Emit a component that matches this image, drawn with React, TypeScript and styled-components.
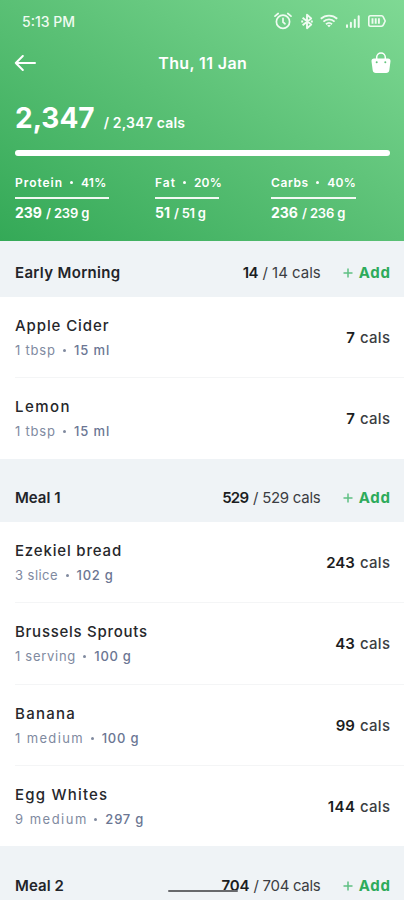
import React from 'react';
import styled, { createGlobalStyle } from 'styled-components';

const GlobalStyle = createGlobalStyle`
  *, *::before, *::after { box-sizing: border-box; }
  html, body { margin: 0; padding: 0; background: #fff; }
  body { font-family: Inter, 'Open Sans', sans-serif; color: #26272b; overflow: hidden; }
`;

interface TextProps {
  $track?: number;
}

const Text = styled.span<TextProps>`
  letter-spacing: ${({ $track = 0 }) => $track}em;
  margin-right: ${({ $track = 0 }) => -$track}em;
  white-space: pre;
`;

const Screen = styled.main`
  width: 100%;
  height: 900px;
  overflow: hidden;
  position: relative;
`;

const Header = styled.header`
  height: 241px;
  display: flex;
  flex-direction: column;
  color: #fff;
  background: linear-gradient(to top right, #34a957 0%, #5ac075 50%, #7fd994 100%);
`;

const StatusBar = styled.div`
  height: 42px;
  padding: 0 18px 0 22px;
  display: flex;
  align-items: center;
  justify-content: space-between;
  font-size: 14px;
  font-weight: 500;
  color: #effbf1;
`;

const StatusIcons = styled.div`
  display: flex;
  align-items: center;
  svg { display: block; }
`;

const Bluetooth = styled.span`
  margin: 0 7px 0 9px;
`;

const Wifi = styled.span`
  margin-right: 8px;
`;

const Signal = styled.span`
  margin-right: 8px;
`;

const NavBar = styled.nav`
  height: 42px;
  padding: 0 13px 0 14px;
  display: grid;
  grid-template-columns: 22px 1fr 20px;
  align-items: center;
  svg { display: block; }
`;

const NavTitle = styled.h1`
  margin: 0;
  padding-right: 2px;
  text-align: center;
  font-size: 16px;
  font-weight: 600;
  line-height: 20px;
`;

const Calories = styled.div`
  height: 66px;
  padding: 0 15px 15px;
  display: flex;
  align-items: flex-end;
  gap: 9px;
`;

const CaloriesEaten = styled(Text)`
  font-size: 28px;
  font-weight: 700;
  line-height: 34px;
`;

const CaloriesGoal = styled(Text)`
  font-size: 14px;
  font-weight: 600;
  line-height: 25px;
`;

const ProgressTrack = styled.div`
  height: 6px;
  margin: 0 14px 0 15px;
  border-radius: 3px;
  background: #fff;
`;

const Macros = styled.div`
  padding: 16px 15px 0;
  display: grid;
  grid-template-columns: 140px 116px 1fr;
`;

const Macro = styled.div<{ $width: number }>`
  width: ${({ $width }) => $width}px;
`;

const MacroLabel = styled.div`
  height: 27px;
  padding-bottom: 5px;
  display: flex;
  align-items: center;
  font-size: 12px;
  font-weight: 600;
  border-bottom: 2px solid rgba(255, 255, 255, 0.92);
`;

const MacroAmount = styled.div`
  height: 28px;
  display: flex;
  align-items: center;
  gap: 4px;
  font-size: 13px;
  font-weight: 600;
  line-height: 18px;
`;

const Strong = styled(Text)`
  font-size: 14px;
  font-weight: 700;
`;

const Dot = styled.i`
  flex: none;
  width: 3px;
  height: 3px;
  margin: 1px 8px 0;
  border-radius: 50%;
  background: currentColor;
`;

const SectionBar = styled.div<{ $height: number; $overlap: number }>`
  height: ${({ $height }) => $height}px;
  margin-top: ${({ $overlap }) => -$overlap}px;
  padding: 0 14px 14px 15px;
  display: flex;
  align-items: flex-end;
  background: #eff3f6;
  font-size: 15px;
  line-height: 20px;
  color: #3b3d42;
`;

const SectionTitle = styled.h2`
  margin: 0;
  flex: 1;
  font-size: 15px;
  font-weight: 600;
  color: #222429;
`;

const SectionTotal = styled.div`
  display: flex;
  gap: 4px;
  margin-right: 22px;
`;

const Bold = styled(Text)`
  font-weight: 600;
  color: #1b1d21;
`;

const AddButton = styled.button`
  padding: 0;
  border: 0;
  background: none;
  display: flex;
  align-items: center;
  gap: 6px;
  font: 700 15px/20px Inter, sans-serif;
  color: #2dab5b;
  svg { display: block; }
`;

const FoodList = styled.ul`
  list-style: none;
  margin: 0;
  padding: 0;
  background: #fff;
`;

const FoodRow = styled.li<{ $height: number }>`
  height: ${({ $height }) => $height}px;
  margin-left: 15px;
  padding-right: 14px;
  display: flex;
  align-items: flex-start;
  justify-content: space-between;
  & + & { box-shadow: 0 -1px 0 #f4f5f6; }
`;

const FoodInfo = styled.div`
  padding-top: 17px;
`;

const FoodName = styled.div`
  font-size: 15px;
  font-weight: 450;
  line-height: 24px;
`;

const Serving = styled.div`
  display: flex;
  align-items: center;
  font-size: 13px;
  line-height: 24px;
  color: #808a9f;
`;

const Weight = styled(Text)`
  font-weight: 500;
  color: #6b7693;
`;

const FoodCalories = styled.div`
  display: flex;
  gap: 5px;
  padding-top: 30px;
  font-size: 15px;
  line-height: 22px;
  font-weight: 450;
  color: #3b3d42;
`;

const HomeIndicator = styled.div`
  position: absolute;
  left: 168px;
  top: 890px;
  width: 70px;
  height: 2px;
  border-radius: 1px;
  background: #68696c;
`;

type Tracked = [text: string, track: number];

interface Food {
  name: Tracked;
  serving: Tracked;
  weight: Tracked;
  calories: Tracked;
}

interface Meal {
  title: Tracked;
  eaten: Tracked;
  goal: Tracked;
  barHeight: number;
  barOverlap?: number;
  rowHeight: number;
  foods: Food[];
}

const macros: { label: Tracked; share: Tracked; eaten: Tracked; goal: Tracked; width: number }[] = [
  { label: ['Protein', 0.08], share: ['41%', 0.02], eaten: ['239', 0], goal: ['/ 239 g', -0.01], width: 94 },
  { label: ['Fat', 0.08], share: ['20%', 0.02], eaten: ['51', 0], goal: ['/ 51 g', -0.02], width: 64 },
  { label: ['Carbs', 0.05], share: ['40%', 0.03], eaten: ['236', 0], goal: ['/ 236 g', -0.01], width: 85 },
];

const meals: Meal[] = [
  {
    title: ['Early Morning', 0.022],
    eaten: ['14', -0.04],
    goal: ['/ 14 cals', 0],
    barHeight: 56,
    rowHeight: 81,
    foods: [
      { name: ['Apple Cider', 0.06], serving: ['1 tbsp', 0.06], weight: ['15 ml', 0.07], calories: ['7', 0] },
      { name: ['Lemon', 0.095], serving: ['1 tbsp', 0.06], weight: ['15 ml', 0.07], calories: ['7', 0] },
    ],
  },
  {
    title: ['Meal 1', 0],
    eaten: ['529', -0.05],
    goal: ['/ 529 cals', -0.018],
    barHeight: 63,
    rowHeight: 81.3,
    foods: [
      { name: ['Ezekiel bread', 0.055], serving: ['3 slice', 0.035], weight: ['102 g', 0.055], calories: ['243', 0] },
      { name: ['Brussels Sprouts', 0.049], serving: ['1 serving', 0.055], weight: ['100 g', 0.055], calories: ['43', 0] },
      { name: ['Banana', 0.085], serving: ['1 medium', 0.105], weight: ['100 g', 0.06], calories: ['99', 0] },
      { name: ['Egg Whites', 0.08], serving: ['9 medium', 0.115], weight: ['297 g', 0.06], calories: ['144', 0.03] },
    ],
  },
  {
    title: ['Meal 2', 0.005],
    eaten: ['704', -0.01],
    goal: ['/ 704 cals', -0.02],
    barHeight: 64,
    barOverlap: 1.2,
    rowHeight: 81,
    foods: [],
  },
];

const AlarmIcon = () => (
  <svg width="18" height="18" viewBox="0 0 18 18" fill="none" stroke="currentColor" strokeWidth="1.7" strokeLinecap="round">
    <circle cx="9" cy="9.8" r="6.6" />
    <path d="M9 6.3v3.7l2 1.8M1 4.2 4.2 1.5M17 4.2l-3.2-2.7" />
  </svg>
);

const BluetoothIcon = () => (
  <svg width="12" height="17" viewBox="0 0 12 17" fill="none" stroke="currentColor" strokeWidth="1.9" strokeLinejoin="round">
    <path d="M1.6 4.7 10.2 11.6 6 15.2V1.8l4.2 3.6-8.600 6.9" />
    <path d="M.2 8.500h2M9.800 8.500h2" />
  </svg>
);

const WifiIcon = () => (
  <svg width="18" height="14" viewBox="0 0 18 14" fill="none" stroke="currentColor" strokeWidth="1.9">
    <path d="M.8 4.8c4.700-4.300 11.700-4.300 16.400 0M3.400 7.600c3.200-3 8-3 11.200 0M6 10.200c1.800-1.600 4.200-1.600 6 0" />
    <path d="m7.200 11.400 1.800 1.900 1.800-1.900c-1-.8-2.600-.8-3.600 0Z" fill="currentColor" stroke="none" />
  </svg>
);

const SignalIcon = () => (
  <svg width="14" height="13" viewBox="0 0 14 13" fill="none" stroke="currentColor" strokeWidth="2" strokeLinecap="round">
    <path d="M1 11.900v-1.600M4.900 11.900V7.800M8.800 11.900V4.800M12.700 11.900V1.200" />
  </svg>
);

const BatteryIcon = () => (
  <svg width="18" height="12" viewBox="0 0 18 12" fill="none" stroke="currentColor" strokeWidth="1.6" strokeLinejoin="round">
    <path d="M2.500.8h11c1.200 0 1.600.6 2 1.600L17.200 6l-1.700 3.600c-.4 1-.8 1.600-2 1.600h-11C1.400 11.200.8 10.600.8 9.500v-7C.8 1.400 1.400.8 2.500.8Z" />
    <path d="M4.500 3.200v5.600M7.700 3.200v5.600M10.900 3.200v5.600" strokeWidth="1.900" />
  </svg>
);

const BackIcon = () => (
  <svg width="22" height="16" viewBox="0 0 22 16" fill="none" stroke="currentColor" strokeWidth="2" strokeLinecap="round" strokeLinejoin="round">
    <path d="M21 8H1.800M8.800 1 1.800 8l7 7" />
  </svg>
);

const BagIcon = () => (
  <svg width="20" height="22" viewBox="0 0 20 22">
    <path d="M5.700 8V5.300a4.300 4.300 0 0 1 8.600 0V8" fill="none" stroke="#fff" strokeWidth="1.500" />
    <path d="M3 6.500h14c1.600 0 2.700 1.200 2.500 2.700l-1.200 9c-.2 1.700-1.400 2.800-3.100 2.800H4.800c-1.700 0-2.900-1.100-3.100-2.800l-1.200-9C.3 7.700 1.400 6.500 3 6.500Z" fill="#fff" />
    <circle cx="5.700" cy="10.300" r="1" fill="#63c47d" />
    <circle cx="14.300" cy="10.300" r="1" fill="#63c47d" />
  </svg>
);

const PlusIcon = () => (
  <svg width="10" height="10" viewBox="0 0 10 10" stroke="#5fc083" strokeWidth="1.500">
    <path d="M5 .5v9M.5 5h9" />
  </svg>
);

const T = ({ value, as: Tag = Text }: { value: Tracked; as?: typeof Text }) => <Tag $track={value[1]}>{value[0]}</Tag>;

export default function App() {
  return (
    <Screen>
      <GlobalStyle />
      <Header>
        <StatusBar>
          <Text>5:13 PM</Text>
          <StatusIcons>
            <AlarmIcon />
            <Bluetooth><BluetoothIcon /></Bluetooth>
            <Wifi><WifiIcon /></Wifi>
            <Signal><SignalIcon /></Signal>
            <BatteryIcon />
          </StatusIcons>
        </StatusBar>
        <NavBar>
          <BackIcon />
          <NavTitle><Text $track={0.024}>Thu, 11 Jan</Text></NavTitle>
          <BagIcon />
        </NavBar>
        <Calories>
          <CaloriesEaten>2,347</CaloriesEaten>
          <CaloriesGoal $track={0.014}>/ 2,347 cals</CaloriesGoal>
        </Calories>
        <ProgressTrack />
        <Macros>
          {macros.map((m) => (
            <Macro key={m.label[0]} $width={m.width}>
              <MacroLabel>
                <T value={m.label} /><Dot /><T value={m.share} />
              </MacroLabel>
              <MacroAmount>
                <T value={m.eaten} as={Strong} /><T value={m.goal} />
              </MacroAmount>
            </Macro>
          ))}
        </Macros>
      </Header>
      {meals.map((meal) => (
        <section key={meal.title[0]}>
          <SectionBar $height={meal.barHeight} $overlap={meal.barOverlap ?? 0}>
            <SectionTitle><T value={meal.title} /></SectionTitle>
            <SectionTotal>
              <T value={meal.eaten} as={Bold} /><T value={meal.goal} />
            </SectionTotal>
            <AddButton><PlusIcon /><Text $track={0.05}>Add</Text></AddButton>
          </SectionBar>
          <FoodList>
            {meal.foods.map((food) => (
              <FoodRow key={food.name[0]} $height={meal.rowHeight}>
                <FoodInfo>
                  <FoodName><T value={food.name} /></FoodName>
                  <Serving>
                    <T value={food.serving} /><Dot /><T value={food.weight} as={Weight} />
                  </Serving>
                </FoodInfo>
                <FoodCalories>
                  <T value={food.calories} as={Bold} /><Text $track={0.02}>cals</Text>
                </FoodCalories>
              </FoodRow>
            ))}
          </FoodList>
        </section>
      ))}
      <HomeIndicator />
    </Screen>
  );
}
